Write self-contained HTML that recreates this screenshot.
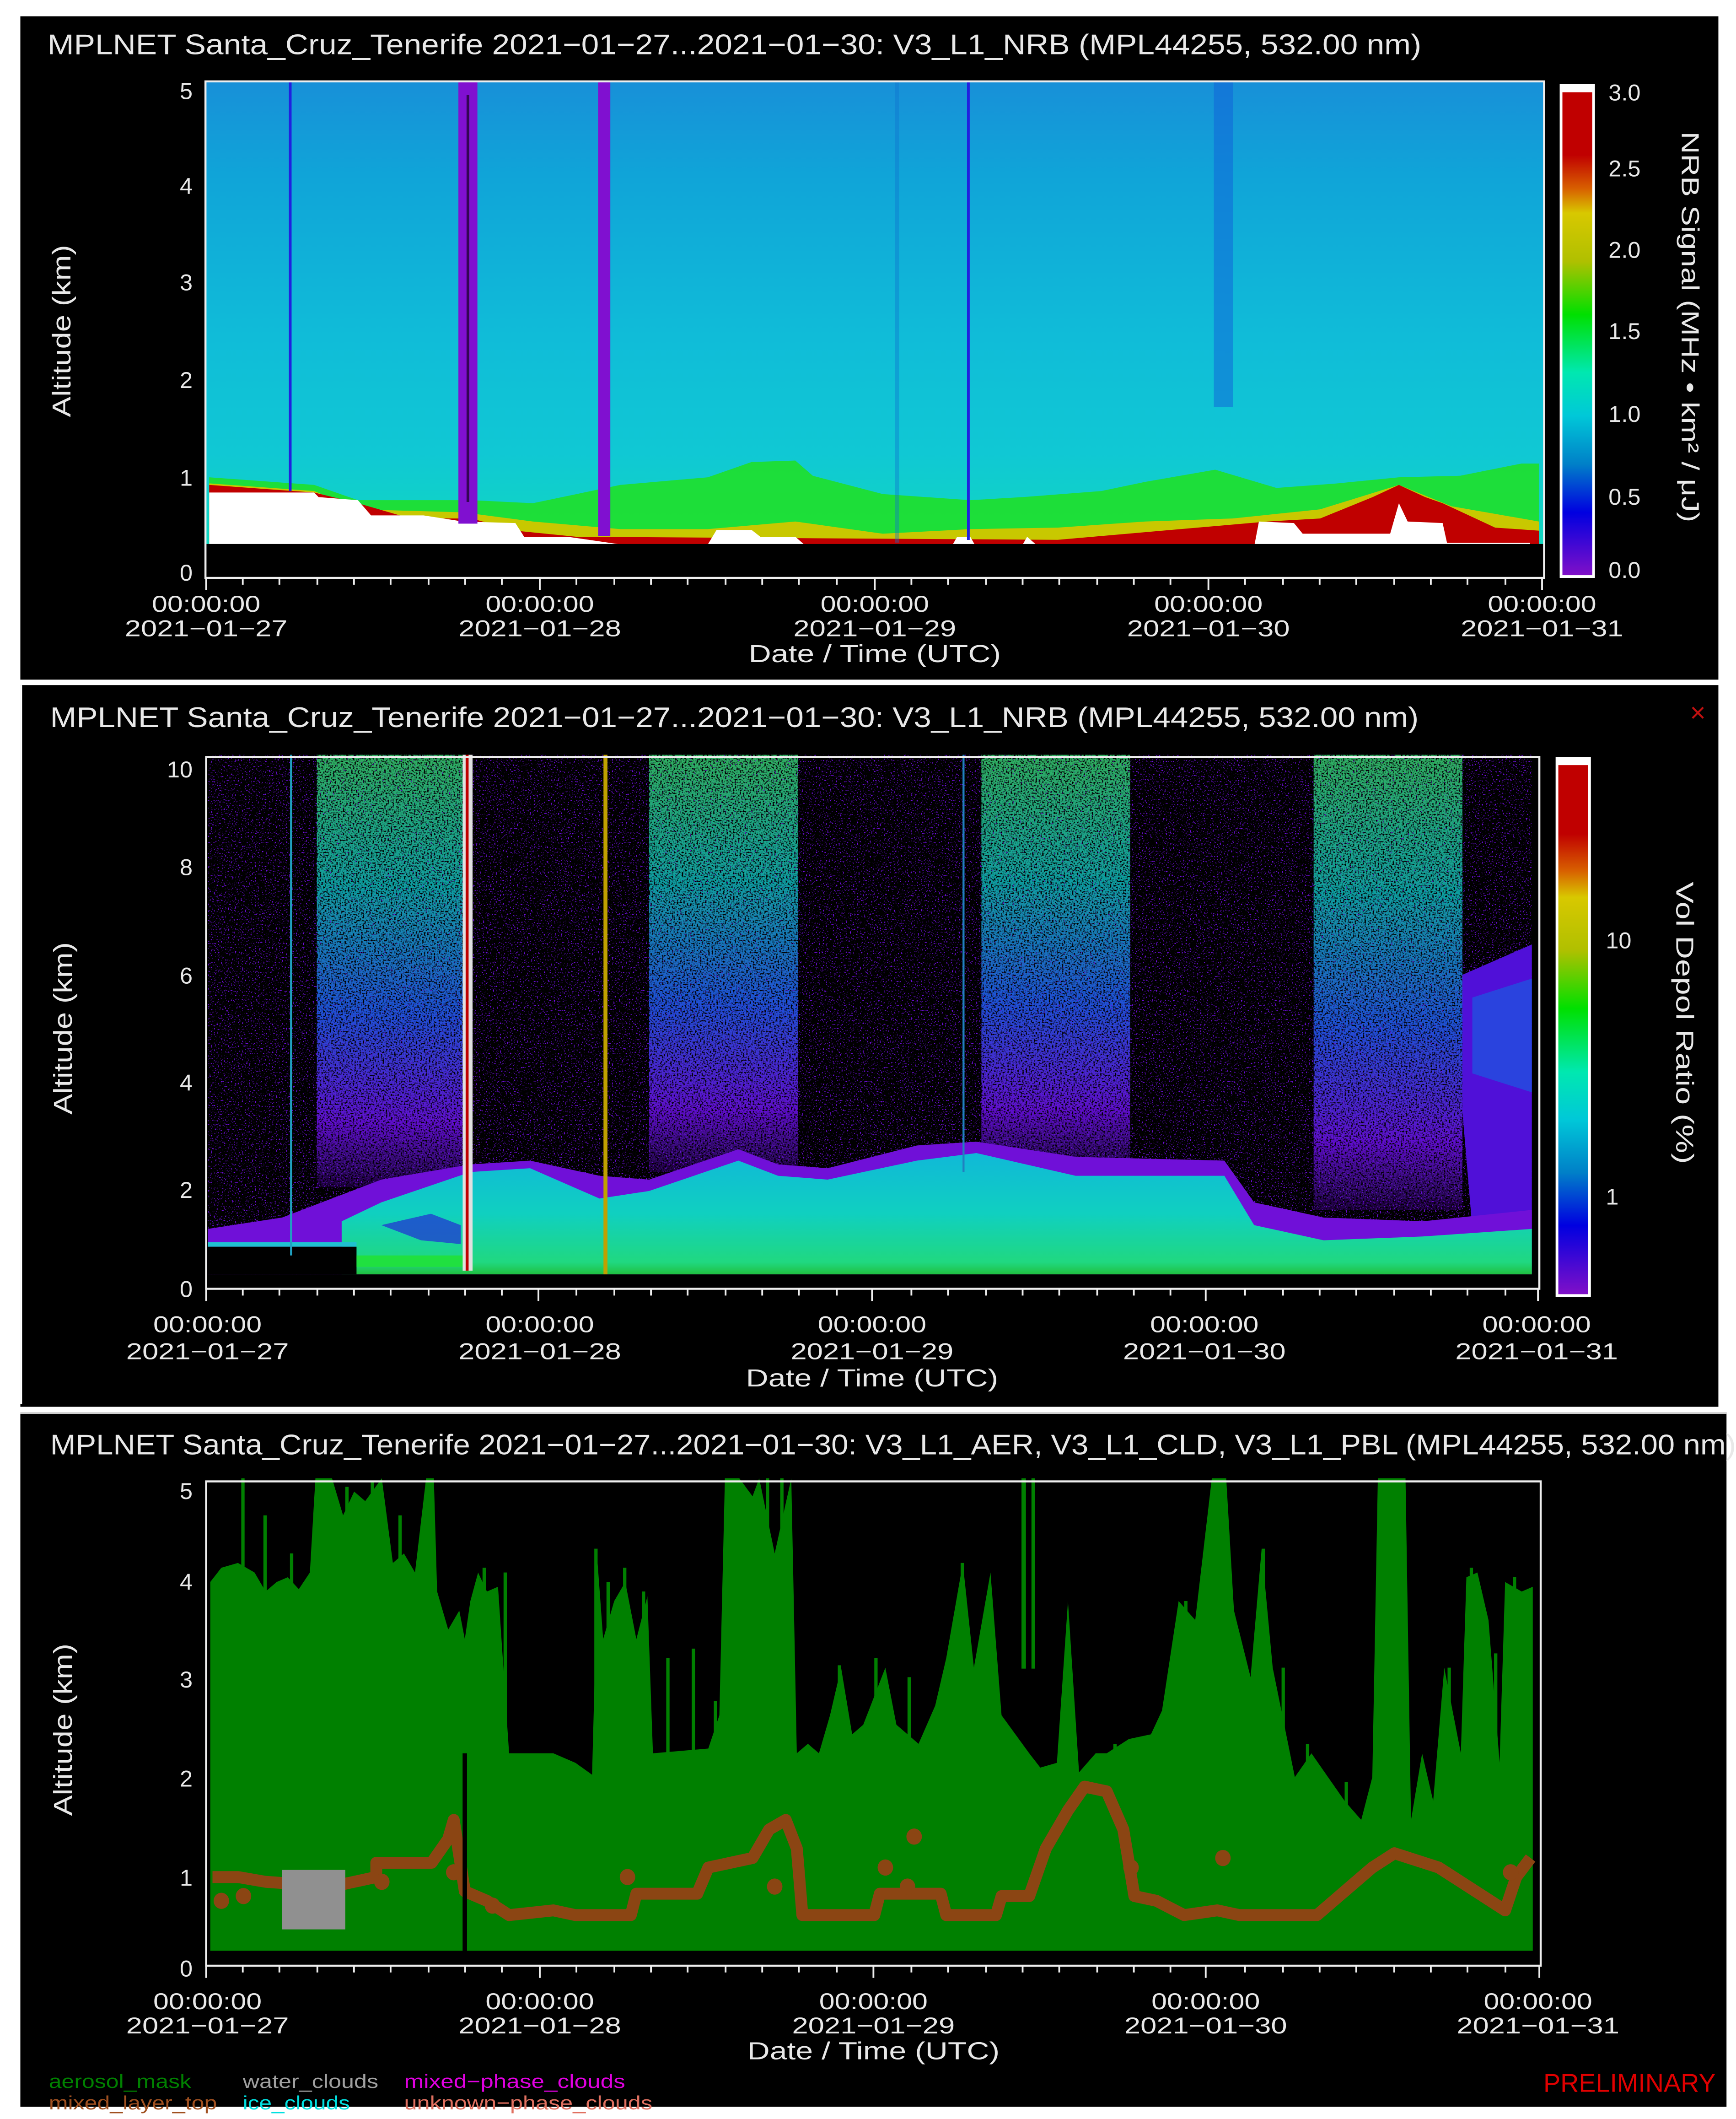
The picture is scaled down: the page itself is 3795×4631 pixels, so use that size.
<!DOCTYPE html>
<html><head><meta charset="utf-8"><style>
html,body{margin:0;padding:0;background:#fff;}
svg{display:block;}
text{font-family:"Liberation Sans",sans-serif;fill:#e8e8e8;}
</style></head><body>
<svg width="3795" height="4631" viewBox="0 0 1280 1562" preserveAspectRatio="none" xmlns="http://www.w3.org/2000/svg">
<defs>
<linearGradient id="cb" x1="0" y1="0" x2="0" y2="1">
<stop offset="0" stop-color="#c00000"/><stop offset="0.13" stop-color="#c00000"/><stop offset="0.2" stop-color="#d86000"/><stop offset="0.25" stop-color="#d8c800"/><stop offset="0.35" stop-color="#b0c000"/><stop offset="0.46" stop-color="#00e000"/><stop offset="0.58" stop-color="#00e8b0"/><stop offset="0.67" stop-color="#00c8d8"/><stop offset="0.77" stop-color="#0080c8"/><stop offset="0.87" stop-color="#0000e0"/><stop offset="1" stop-color="#8010c8"/></linearGradient>
<linearGradient id="bg1" x1="0" y1="0" x2="0" y2="1">
<stop offset="0" stop-color="#1890d8"/><stop offset="0.2" stop-color="#10a4d8"/><stop offset="0.55" stop-color="#10bcd8"/><stop offset="0.8" stop-color="#10c8d4"/><stop offset="1" stop-color="#10d8c0"/></linearGradient>
<linearGradient id="col" x1="0" y1="0" x2="0" y2="1">
<stop offset="0" stop-color="#30b060"/><stop offset="0.3" stop-color="#10a0a0"/><stop offset="0.6" stop-color="#2050d8"/><stop offset="0.85" stop-color="#6010d0"/><stop offset="1" stop-color="#6010d0" stop-opacity="0.3"/></linearGradient>
<linearGradient id="low" x1="0" y1="0" x2="0" y2="1">
<stop offset="0" stop-color="#10b8d8"/><stop offset="0.5" stop-color="#10d0c0"/><stop offset="0.9" stop-color="#20d880"/><stop offset="1" stop-color="#20c040"/></linearGradient>
<filter id="spk" x="0" y="0" width="1" height="1">
<feTurbulence type="fractalNoise" baseFrequency="0.6 0.25" numOctaves="1" seed="3" result="n"/>
<feColorMatrix in="n" type="matrix" values="0 0 0 0 0  0 0 0 0 0  0 0 0 0 0  5 0 0 0 -1.6" result="m"/>
<feComposite in="SourceGraphic" in2="m" operator="in"/>
</filter>
<filter id="spk2" x="0" y="0" width="1" height="1">
<feTurbulence type="fractalNoise" baseFrequency="0.7 0.3" numOctaves="1" seed="7" result="n"/>
<feColorMatrix in="n" type="matrix" values="0 0 0 0 0  0 0 0 0 0  0 0 0 0 0  10 0 0 0 -6.0" result="m"/>
<feComposite in="SourceGraphic" in2="m" operator="in"/>
</filter>
</defs>

<!-- ============ PANEL 1 ============ -->
<rect x="15" y="12" width="1252" height="489" fill="#000"/>
<text x="35" y="40" font-size="21" textLength="1013" lengthAdjust="spacingAndGlyphs">MPLNET Santa_Cruz_Tenerife 2021−01−27...2021−01−30:  V3_L1_NRB  (MPL44255, 532.00 nm)</text>
<rect x="152" y="60" width="986" height="342" fill="url(#bg1)"/>
<g transform="translate(134.9,303.5) scale(0.645,0.1124)">
<polygon fill="#20e020" opacity="0.85" points="30,430 150,480 200,580 330,580 400,600 500,480 600,430 650,330 700,320 720,420 800,540 900,580 960,560 1050,520 1100,460 1180,380 1250,500 1320,470 1390,430 1460,420 1530,340 1550,340 1550,870 30,870"/>
<polygon fill="#c8c800" points="30,470 150,520 200,640 320,660 400,720 500,770 600,770 700,720 800,800 900,770 1000,760 1100,720 1200,700 1300,640 1390,480 1450,620 1550,720 1550,870 30,870"/>
<polygon fill="#c00000" points="30,480 150,530 200,600 260,700 330,700 380,780 450,820 1000,840 1240,720 1300,700 1360,560 1390,480 1420,560 1440,600 1500,760 1550,780 1550,870 30,870"/>
<polygon fill="#fff" points="30,530 150,530 155,560 200,580 215,680 270,680 275,680 320,720 380,730 390,820 440,820 500,870 600,870 610,775 650,775 660,820 700,820 710,870 880,870 885,820 900,820 905,870 960,870 965,820 975,870 1225,870 1230,720 1270,730 1280,800 1380,800 1390,600 1400,720 1440,730 1445,860 1540,860 1540,870 30,870"/>
</g>
<rect x="213" y="60" width="2" height="302" fill="#2020e0"/>
<rect x="338" y="60" width="14" height="326" fill="#8010d0"/>
<rect x="344" y="70" width="2" height="300" fill="#000" opacity="0.6"/>
<rect x="441" y="60" width="9" height="335" fill="#8010d0"/>
<rect x="713" y="60" width="2" height="338" fill="#2020e0"/>
<rect x="660" y="60" width="3" height="340" fill="#1070d0" opacity="0.4"/>
<rect x="895" y="60" width="14" height="240" fill="#1060d8" opacity="0.5"/>
<rect x="152" y="401" width="986" height="25" fill="#000"/>
<rect x="151.5" y="60" width="987" height="366" fill="none" stroke="#eee" stroke-width="1.5"/>
<g font-size="17" text-anchor="end"><text x="142" y="73">5</text><text x="142" y="143">4</text><text x="142" y="214">3</text><text x="142" y="286">2</text><text x="142" y="358">1</text><text x="142" y="428">0</text></g>
<text font-size="19" transform="translate(52,244) rotate(-90)" text-anchor="middle" textLength="127" lengthAdjust="spacingAndGlyphs">Altitude (km)</text>
<rect x="1150" y="62" width="26" height="364" fill="#fff"/>
<rect x="1152" y="68" width="22" height="356" fill="url(#cb)"/>
<g font-size="17"><text x="1186" y="74">3.0</text><text x="1186" y="130">2.5</text><text x="1186" y="190">2.0</text><text x="1186" y="250">1.5</text><text x="1186" y="311">1.0</text><text x="1186" y="372">0.5</text><text x="1186" y="426">0.0</text></g>
<text font-size="18" transform="translate(1240,241) rotate(90)" text-anchor="middle" textLength="288" lengthAdjust="spacingAndGlyphs">NRB Signal (MHz • km² / μJ)</text>

<!-- ============ PANEL 2 ============ -->
<rect x="15" y="505" width="1252" height="532" fill="#000"/>
<rect x="15" y="505" width="1.3" height="530" fill="#fff"/>
<text x="37" y="536" font-size="21" textLength="1009" lengthAdjust="spacingAndGlyphs">MPLNET Santa_Cruz_Tenerife 2021−01−27...2021−01−30:  V3_L1_NRB  (MPL44255, 532.00 nm)</text>
<text x="1246" y="532" font-size="20" style="fill:#c01010">×</text>
<g transform="translate(134.9,539.6) scale(0.7313,0.2796)">
<rect x="25" y="60" width="1335" height="1370" fill="#7010e0" filter="url(#spk2)"/>
<rect x="135" y="60" width="150" height="1140" fill="url(#col)" filter="url(#spk)"/>
<rect x="470" y="60" width="150" height="1100" fill="url(#col)" filter="url(#spk)"/>
<rect x="805" y="60" width="150" height="1100" fill="url(#col)" filter="url(#spk)"/>
<rect x="1140" y="60" width="150" height="1200" fill="url(#col)" filter="url(#spk)"/>
<polygon fill="#5010d8" points="1290,640 1360,560 1360,1310 1300,1310 1290,1000"/>
<polygon fill="#2050e0" opacity="0.8" points="1300,700 1360,650 1360,950 1300,900"/>
<polygon fill="#7010d8" points="25,1310 100,1280 150,1230 200,1180 290,1140 350,1130 420,1170 470,1180 560,1100 600,1140 650,1150 740,1090 800,1080 900,1120 1050,1130 1080,1240 1150,1280 1250,1290 1360,1260 1360,1430 25,1430"/>
<polygon fill="url(#low)" points="160,1290 200,1240 290,1160 350,1150 420,1230 470,1210 560,1130 600,1170 650,1180 740,1130 800,1110 900,1170 1050,1170 1080,1300 1150,1340 1250,1330 1360,1310 1360,1430 160,1430"/>
<polygon fill="#2040d0" opacity="0.8" points="200,1300 250,1270 280,1300 280,1350 240,1340"/>
<rect x="25" y="1345" width="150" height="12" fill="#20c0d0"/>
<rect x="25" y="1357" width="150" height="73" fill="#000"/>
<rect x="175" y="1380" width="110" height="30" fill="#20e040"/>
<rect x="282" y="60" width="10" height="1360" fill="#e0e0e0"/>
<rect x="285" y="60" width="3" height="1360" fill="#c00000"/>
<rect x="424" y="60" width="4" height="1370" fill="#c0a000"/>
<rect x="108" y="60" width="2" height="1320" fill="#20a0c0"/>
<rect x="786" y="60" width="2" height="1100" fill="#2080c0"/>
<rect x="25" y="1430" width="1335" height="45" fill="#000"/>
</g>
<rect x="152" y="558" width="983" height="392" fill="none" stroke="#eee" stroke-width="1.5"/>
<g font-size="17" text-anchor="end"><text x="142" y="573">10</text><text x="142" y="645">8</text><text x="142" y="725">6</text><text x="142" y="804">4</text><text x="142" y="883">2</text><text x="142" y="956">0</text></g>
<text font-size="19" transform="translate(53,758) rotate(-90)" text-anchor="middle" textLength="127" lengthAdjust="spacingAndGlyphs">Altitude (km)</text>
<rect x="1147" y="558" width="26" height="398" fill="#fff"/>
<rect x="1149" y="564" width="22" height="390" fill="url(#cb)"/>
<g font-size="17"><text x="1184" y="699">10</text><text x="1184" y="888">1</text></g>
<text font-size="18" transform="translate(1236,754) rotate(90)" text-anchor="middle" textLength="208" lengthAdjust="spacingAndGlyphs">Vol Depol Ratio (%)</text>

<!-- ============ PANEL 3 ============ -->
<rect x="15" y="1041" width="1258" height="512" fill="#000"/>
<rect x="15" y="1041" width="1258" height="1.2" fill="#ddd"/>
<text x="37" y="1072" font-size="21" textLength="1243" lengthAdjust="spacingAndGlyphs">MPLNET Santa_Cruz_Tenerife 2021−01−27...2021−01−30:  V3_L1_AER, V3_L1_CLD, V3_L1_PBL  (MPL44255, 532.00 nm)</text>
<g transform="translate(0,1011.8) scale(0.816,0.3508)">
<polygon fill="#008000" points="190,440 200,410 215,400 230,420 240,460 250,440 260,430 270,455 280,420 285,222 300,222 310,300 320,250 330,270 345,222 355,400 365,380 375,420 385,222 392,222 395,460 405,540 415,500 420,560 425,480 432,420 440,460 450,450 460,800 500,800 520,820 535,845 540,400 545,560 555,480 565,440 575,560 585,470 590,800 640,790 650,720 655,222 668,222 680,260 686,222 700,380 715,222 720,800 730,780 740,800 750,720 760,620 770,760 780,740 800,620 810,740 830,780 845,700 855,600 870,400 880,620 895,420 905,720 930,800 940,830 955,820 965,480 975,840 990,800 1000,800 1020,770 1040,760 1050,710 1065,480 1080,520 1095,222 1108,222 1115,500 1130,640 1140,370 1150,620 1170,850 1185,800 1200,850 1215,900 1230,940 1240,850 1245,222 1270,222 1275,940 1285,800 1295,900 1305,620 1320,800 1325,430 1335,420 1345,520 1355,820 1360,440 1375,460 1385,450 1385,1215 190,1215"/>
<g fill="#008000">
<rect x="218" y="222" width="3" height="300"/><rect x="238" y="300" width="3" height="300"/><rect x="262" y="380" width="3" height="300"/>
<rect x="312" y="240" width="3" height="300"/><rect x="335" y="230" width="3" height="300"/><rect x="360" y="300" width="3" height="300"/>
<rect x="436" y="410" width="3" height="400"/><rect x="455" y="420" width="3" height="400"/><rect x="537" y="370" width="3" height="500"/>
<rect x="548" y="440" width="3" height="400"/><rect x="563" y="410" width="3" height="400"/><rect x="580" y="460" width="3" height="400"/>
<rect x="602" y="600" width="3" height="300"/><rect x="625" y="580" width="3" height="300"/><rect x="645" y="690" width="3" height="300"/>
<rect x="692" y="222" width="3" height="300"/><rect x="705" y="222" width="3" height="300"/><rect x="757" y="615" width="3" height="300"/>
<rect x="790" y="600" width="3" height="300"/><rect x="820" y="640" width="3" height="300"/><rect x="868" y="400" width="3" height="400"/>
<rect x="923" y="222" width="4" height="400"/><rect x="932" y="222" width="3" height="400"/><rect x="1006" y="780" width="3" height="200"/>
<rect x="1070" y="480" width="3" height="400"/><rect x="1140" y="370" width="3" height="400"/><rect x="1158" y="620" width="3" height="300"/>
<rect x="1180" y="780" width="3" height="200"/><rect x="1215" y="860" width="3" height="200"/><rect x="1308" y="620" width="3" height="300"/>
<rect x="1328" y="410" width="3" height="300"/><rect x="1350" y="590" width="3" height="300"/><rect x="1367" y="430" width="3" height="300"/>
</g>
<polyline fill="none" stroke="#8b4513" stroke-width="26" vector-effect="non-scaling-stroke" stroke-linejoin="round" points="192,1060 215,1060 240,1070 300,1080 340,1060 340,1030 390,1030 405,980 410,940 420,1090 440,1110 460,1140 500,1130 520,1140 570,1140 575,1095 630,1095 640,1040 680,1020 695,960 710,940 720,1000 725,1140 790,1140 795,1095 850,1095 855,1140 900,1140 905,1100 930,1100 945,1000 965,920 980,870 1000,880 1015,960 1025,1100 1045,1110 1070,1140 1100,1130 1120,1140 1190,1140 1210,1100 1240,1040 1260,1010 1300,1040 1340,1100 1360,1130 1370,1060 1383,1020"/>
<g fill="#8b4513"><ellipse cx="200" cy="1110" rx="7" ry="17"/><ellipse cx="220" cy="1100" rx="7" ry="17"/><ellipse cx="345" cy="1070" rx="7" ry="17"/><ellipse cx="410" cy="1050" rx="7" ry="17"/><ellipse cx="445" cy="1120" rx="7" ry="17"/><ellipse cx="567" cy="1060" rx="7" ry="17"/><ellipse cx="700" cy="1080" rx="7" ry="17"/><ellipse cx="800" cy="1040" rx="7" ry="17"/><ellipse cx="826" cy="975" rx="7" ry="17"/><ellipse cx="820" cy="1080" rx="7" ry="17"/><ellipse cx="1022" cy="1040" rx="7" ry="17"/><ellipse cx="1105" cy="1020" rx="7" ry="17"/><ellipse cx="1365" cy="1050" rx="7" ry="17"/></g>
<rect x="255" y="1045" width="57" height="125" fill="#909090"/>
<rect x="418" y="800" width="4" height="415" fill="#000"/>
<rect x="188" y="1215" width="1197" height="35" fill="#000"/>
</g>
<rect x="152" y="1092" width="984" height="357" fill="none" stroke="#eee" stroke-width="1.5"/>
<g font-size="17" text-anchor="end"><text x="142" y="1105">5</text><text x="142" y="1172">4</text><text x="142" y="1244">3</text><text x="142" y="1317">2</text><text x="142" y="1390">1</text><text x="142" y="1457">0</text></g>
<text font-size="19" transform="translate(53,1275) rotate(-90)" text-anchor="middle" textLength="127" lengthAdjust="spacingAndGlyphs">Altitude (km)</text>
<g font-size="14">
<text x="36" y="1539" style="fill:#008000" textLength="105" lengthAdjust="spacingAndGlyphs">aerosol_mask</text>
<text x="179" y="1539" style="fill:#a0a0a0" textLength="100" lengthAdjust="spacingAndGlyphs">water_clouds</text>
<text x="298" y="1539" style="fill:#e000e0" textLength="163" lengthAdjust="spacingAndGlyphs">mixed−phase_clouds</text>
<text x="36" y="1555" style="fill:#a05020" textLength="124" lengthAdjust="spacingAndGlyphs">mixed_layer_top</text>
<text x="179" y="1555" style="fill:#00e0e0" textLength="79" lengthAdjust="spacingAndGlyphs">ice_clouds</text>
<text x="298" y="1555" style="fill:#e07060" textLength="183" lengthAdjust="spacingAndGlyphs">unknown−phase_clouds</text>
</g>
<text x="1138" y="1542" font-size="19" style="fill:#e00000" textLength="127" lengthAdjust="spacingAndGlyphs">PRELIMINARY</text>

<!-- x axes -->
<g stroke="#eee" stroke-width="1.3">
<path d="M152 426v9M398 426v9M645 426v9M891 426v9M1137 426v9 M179 426v5M206 426v5M234 426v5M261 426v5M288 426v5M316 426v5M343 426v5M370 426v5M425 426v5M453 426v5M480 426v5M507 426v5M535 426v5M562 426v5M589 426v5M617 426v5M672 426v5M699 426v5M727 426v5M754 426v5M781 426v5M809 426v5M836 426v5M863 426v5M918 426v5M946 426v5M973 426v5M1000 426v5M1028 426v5M1055 426v5M1082 426v5M1110 426v5"/>
<path d="M152 950v9M397 950v9M643 950v9M889 950v9M1134 950v9 M179 950v5M206 950v5M234 950v5M261 950v5M288 950v5M316 950v5M343 950v5M370 950v5M425 950v5M453 950v5M480 950v5M507 950v5M535 950v5M562 950v5M589 950v5M617 950v5M672 950v5M699 950v5M727 950v5M754 950v5M781 950v5M809 950v5M836 950v5M863 950v5M918 950v5M946 950v5M973 950v5M1000 950v5M1028 950v5M1055 950v5M1082 950v5M1110 950v5"/>
<path d="M152 1449v9M398 1449v9M644 1449v9M889 1449v9M1135 1449v9 M179 1449v5M206 1449v5M234 1449v5M261 1449v5M288 1449v5M316 1449v5M343 1449v5M370 1449v5M425 1449v5M453 1449v5M480 1449v5M507 1449v5M535 1449v5M562 1449v5M589 1449v5M617 1449v5M672 1449v5M699 1449v5M727 1449v5M754 1449v5M781 1449v5M809 1449v5M836 1449v5M863 1449v5M918 1449v5M946 1449v5M973 1449v5M1000 1449v5M1028 1449v5M1055 1449v5M1082 1449v5M1110 1449v5"/>
</g>
<g font-size="17" text-anchor="middle">
<text x="152" y="451" textLength="80" lengthAdjust="spacingAndGlyphs">00:00:00</text><text x="152" y="469" textLength="120" lengthAdjust="spacingAndGlyphs">2021−01−27</text>
<text x="398" y="451" textLength="80" lengthAdjust="spacingAndGlyphs">00:00:00</text><text x="398" y="469" textLength="120" lengthAdjust="spacingAndGlyphs">2021−01−28</text>
<text x="645" y="451" textLength="80" lengthAdjust="spacingAndGlyphs">00:00:00</text><text x="645" y="469" textLength="120" lengthAdjust="spacingAndGlyphs">2021−01−29</text>
<text x="891" y="451" textLength="80" lengthAdjust="spacingAndGlyphs">00:00:00</text><text x="891" y="469" textLength="120" lengthAdjust="spacingAndGlyphs">2021−01−30</text>
<text x="1137" y="451" textLength="80" lengthAdjust="spacingAndGlyphs">00:00:00</text><text x="1137" y="469" textLength="120" lengthAdjust="spacingAndGlyphs">2021−01−31</text>
<text x="645" y="488" font-size="18" textLength="186" lengthAdjust="spacingAndGlyphs">Date / Time (UTC)</text>
<text x="153" y="982" textLength="80" lengthAdjust="spacingAndGlyphs">00:00:00</text><text x="153" y="1002" textLength="120" lengthAdjust="spacingAndGlyphs">2021−01−27</text>
<text x="398" y="982" textLength="80" lengthAdjust="spacingAndGlyphs">00:00:00</text><text x="398" y="1002" textLength="120" lengthAdjust="spacingAndGlyphs">2021−01−28</text>
<text x="643" y="982" textLength="80" lengthAdjust="spacingAndGlyphs">00:00:00</text><text x="643" y="1002" textLength="120" lengthAdjust="spacingAndGlyphs">2021−01−29</text>
<text x="888" y="982" textLength="80" lengthAdjust="spacingAndGlyphs">00:00:00</text><text x="888" y="1002" textLength="120" lengthAdjust="spacingAndGlyphs">2021−01−30</text>
<text x="1133" y="982" textLength="80" lengthAdjust="spacingAndGlyphs">00:00:00</text><text x="1133" y="1002" textLength="120" lengthAdjust="spacingAndGlyphs">2021−01−31</text>
<text x="643" y="1022" font-size="18" textLength="186" lengthAdjust="spacingAndGlyphs">Date / Time (UTC)</text>
<text x="153" y="1481" textLength="80" lengthAdjust="spacingAndGlyphs">00:00:00</text><text x="153" y="1499" textLength="120" lengthAdjust="spacingAndGlyphs">2021−01−27</text>
<text x="398" y="1481" textLength="80" lengthAdjust="spacingAndGlyphs">00:00:00</text><text x="398" y="1499" textLength="120" lengthAdjust="spacingAndGlyphs">2021−01−28</text>
<text x="644" y="1481" textLength="80" lengthAdjust="spacingAndGlyphs">00:00:00</text><text x="644" y="1499" textLength="120" lengthAdjust="spacingAndGlyphs">2021−01−29</text>
<text x="889" y="1481" textLength="80" lengthAdjust="spacingAndGlyphs">00:00:00</text><text x="889" y="1499" textLength="120" lengthAdjust="spacingAndGlyphs">2021−01−30</text>
<text x="1134" y="1481" textLength="80" lengthAdjust="spacingAndGlyphs">00:00:00</text><text x="1134" y="1499" textLength="120" lengthAdjust="spacingAndGlyphs">2021−01−31</text>
<text x="644" y="1518" font-size="18" textLength="186" lengthAdjust="spacingAndGlyphs">Date / Time (UTC)</text>
</g>
</svg>
</body></html>
